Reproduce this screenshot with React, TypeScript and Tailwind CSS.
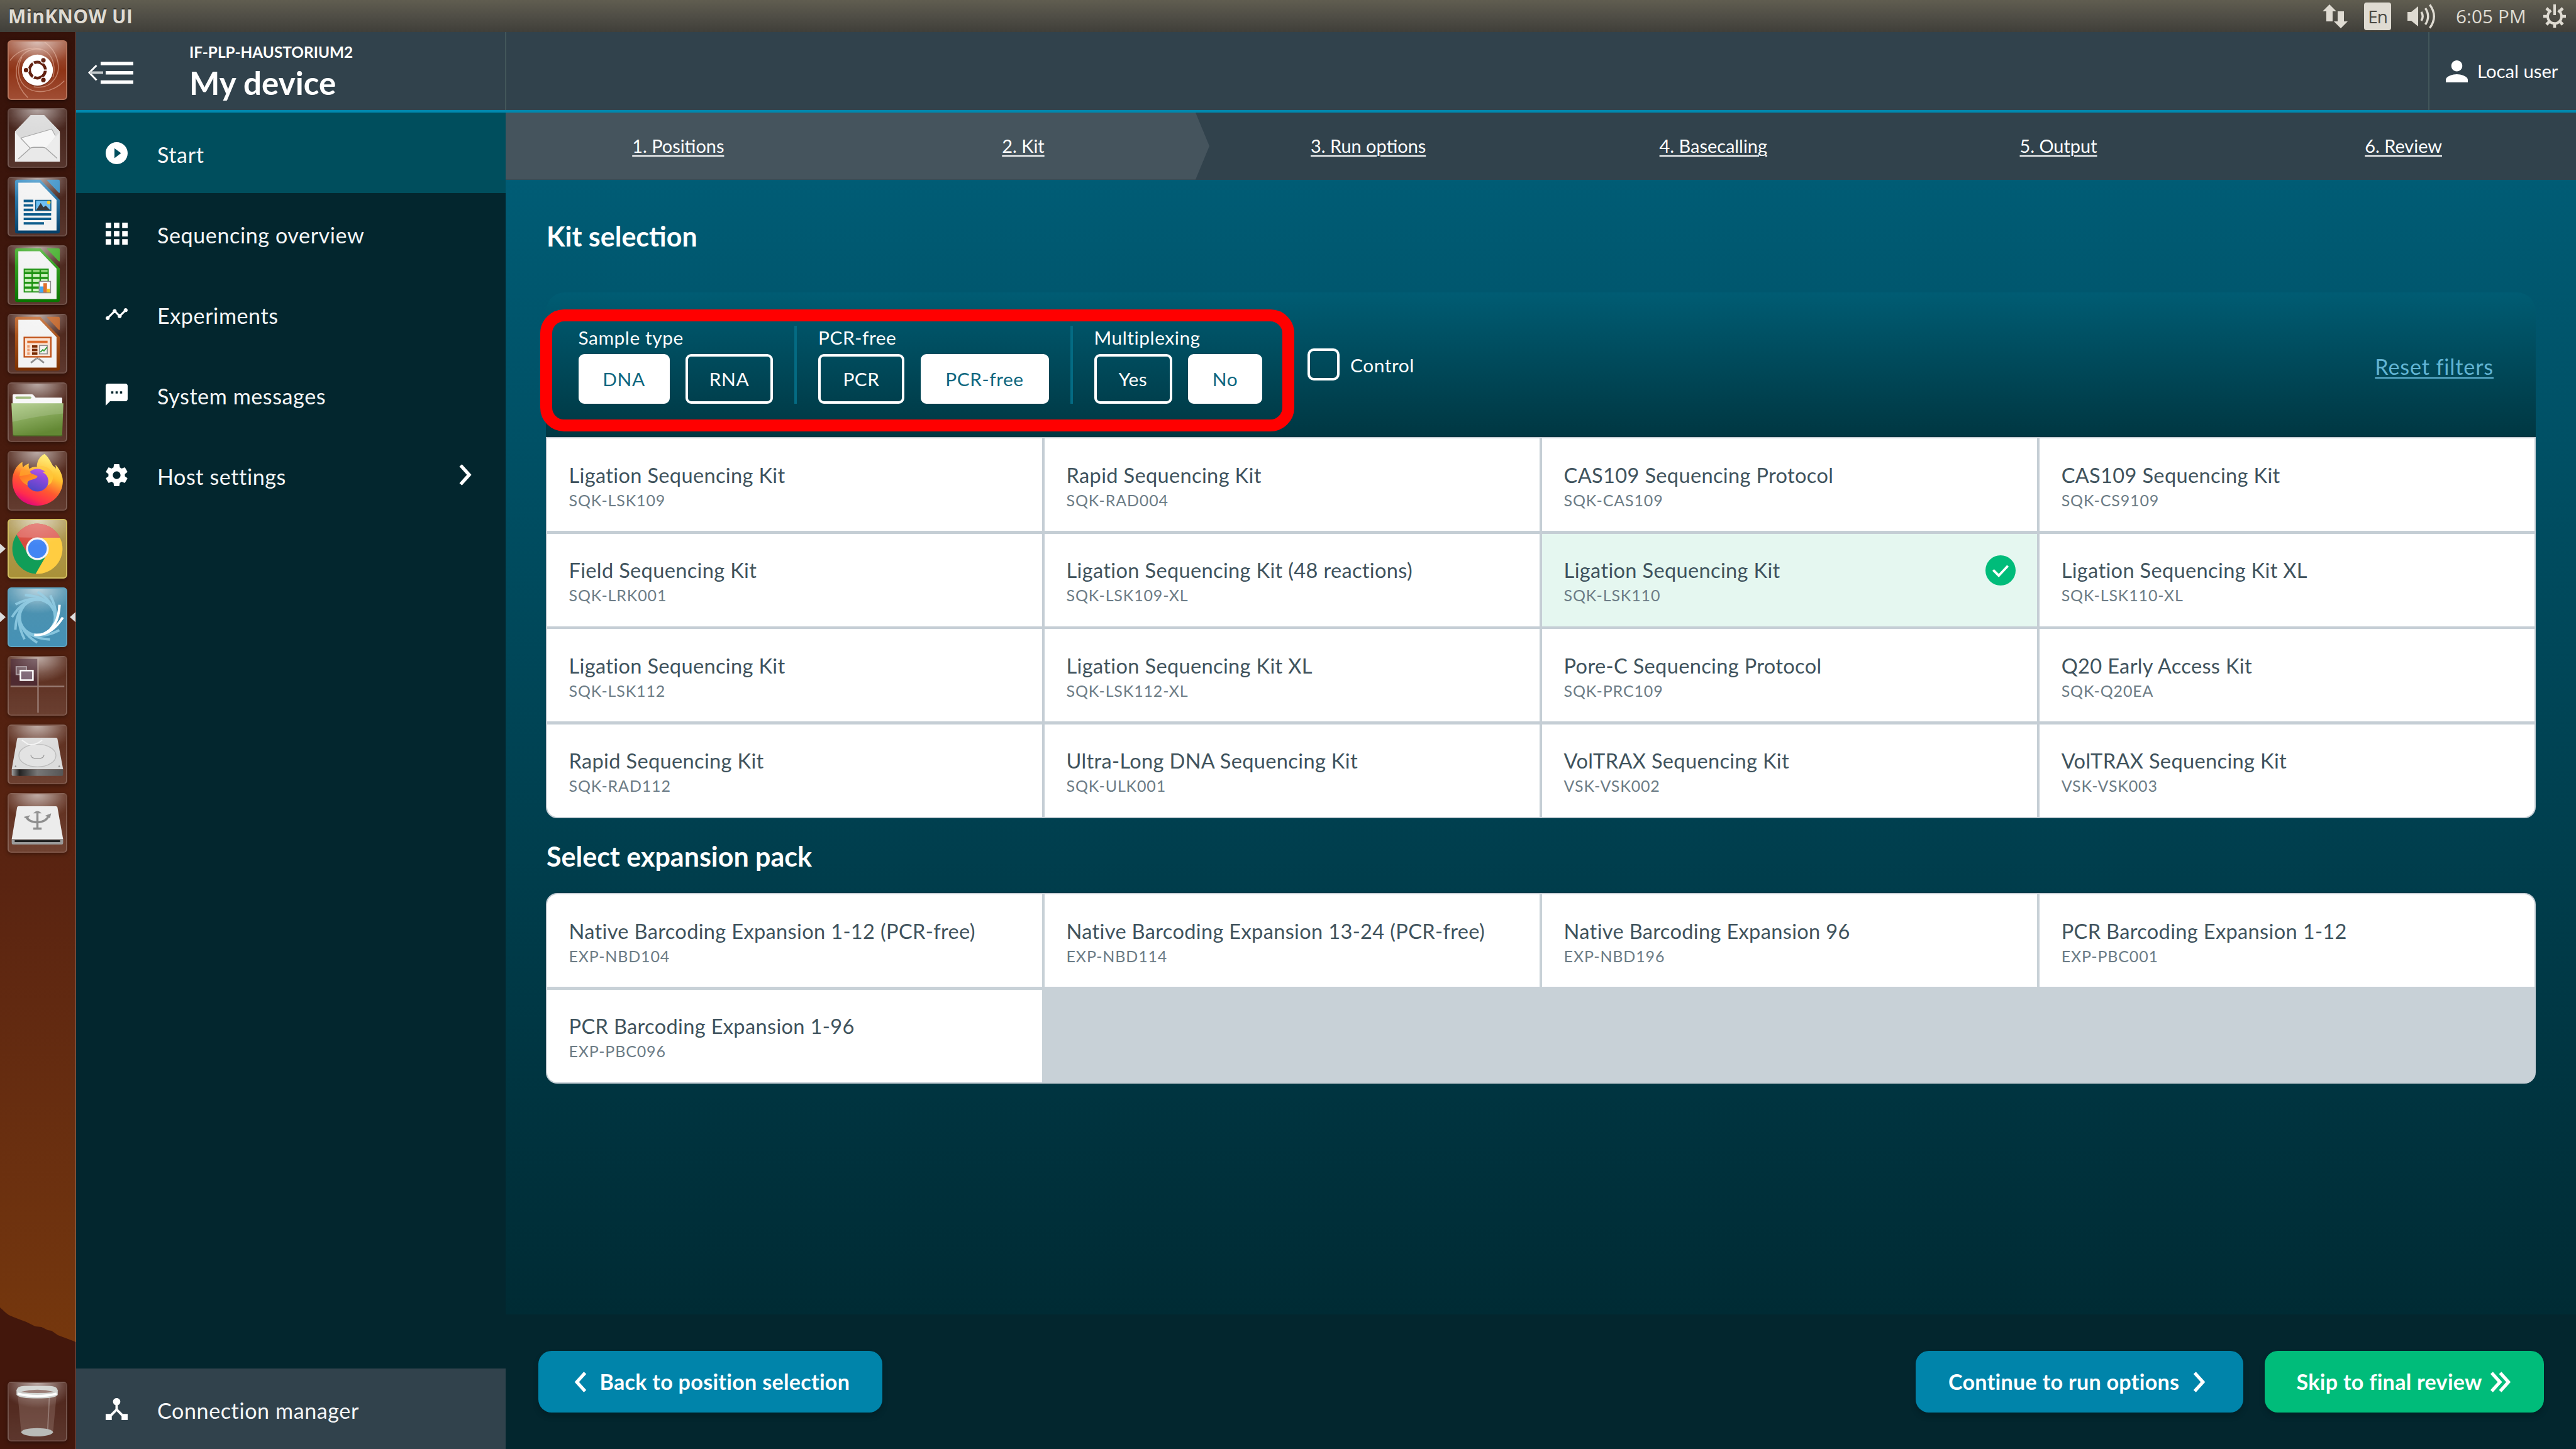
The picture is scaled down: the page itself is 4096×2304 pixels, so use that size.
import React from "react";

type Kit = { name: string; code: string; selected?: boolean };

const KITS: Kit[] = [
  { name: "Ligation Sequencing Kit", code: "SQK-LSK109" },
  { name: "Rapid Sequencing Kit", code: "SQK-RAD004" },
  { name: "CAS109 Sequencing Protocol", code: "SQK-CAS109" },
  { name: "CAS109 Sequencing Kit", code: "SQK-CS9109" },
  { name: "Field Sequencing Kit", code: "SQK-LRK001" },
  { name: "Ligation Sequencing Kit (48 reactions)", code: "SQK-LSK109-XL" },
  { name: "Ligation Sequencing Kit", code: "SQK-LSK110", selected: true },
  { name: "Ligation Sequencing Kit XL", code: "SQK-LSK110-XL" },
  { name: "Ligation Sequencing Kit", code: "SQK-LSK112" },
  { name: "Ligation Sequencing Kit XL", code: "SQK-LSK112-XL" },
  { name: "Pore-C Sequencing Protocol", code: "SQK-PRC109" },
  { name: "Q20 Early Access Kit", code: "SQK-Q20EA" },
  { name: "Rapid Sequencing Kit", code: "SQK-RAD112" },
  { name: "Ultra-Long DNA Sequencing Kit", code: "SQK-ULK001" },
  { name: "VolTRAX Sequencing Kit", code: "VSK-VSK002" },
  { name: "VolTRAX Sequencing Kit", code: "VSK-VSK003" },
];

const EXPANSIONS: Kit[] = [
  { name: "Native Barcoding Expansion 1-12 (PCR-free)", code: "EXP-NBD104" },
  { name: "Native Barcoding Expansion 13-24 (PCR-free)", code: "EXP-NBD114" },
  { name: "Native Barcoding Expansion 96", code: "EXP-NBD196" },
  { name: "PCR Barcoding Expansion 1-12", code: "EXP-PBC001" },
  { name: "PCR Barcoding Expansion 1-96", code: "EXP-PBC096" },
];

const STEPS = ["1. Positions", "2. Kit", "3. Run options", "4. Basecalling", "5. Output", "6. Review"];

/* ---------- top panel ---------- */

function TopPanel() {
  return (
    <div className="flex h-[51px] shrink-0 items-center justify-between bg-linear-to-b from-[#605d50] via-[#504e46] to-[#403f39] pr-[16px] pl-[13px] text-[#dfdbd2]">
      <div className="font-['Open_Sans'] text-[30px] leading-[48px] font-bold tracking-[0.35px] [text-shadow:0_-2px_1px_rgba(0,0,0,0.5)]">MinKNOW UI</div>
      <div className="flex items-center">
        <svg className="h-[38px] w-[40px]" viewBox="0 0 40 38" fill="currentColor">
          <path d="M11 0L22 11H16V27H6V11H0Z" />
          <path d="M29 38L18 27H24V11H34V27H40Z" />
        </svg>
        <div className="ml-[26px] flex h-[44px] w-[43px] items-center justify-center rounded-[4px] bg-[#dfdbd2] font-['Open_Sans'] text-[28px] leading-[40px] tracking-[-1px] text-[#4a4942]">En</div>
        <svg className="ml-[26px] h-[40px] w-[45px]" viewBox="0 0 45 40" fill="none" stroke="currentColor" strokeWidth="3.4">
          <path d="M0 13H6L17 4V36L6 27H0Z" fill="currentColor" stroke="none" />
          <path d="M22 13Q26.5 20 22 27" />
          <path d="M28.5 7Q37 20 28.5 33" />
          <path d="M35.5 1.5Q49 20 35.5 38.5" />
        </svg>
        <div className="ml-[32px] w-[111px] font-['Open_Sans'] text-[29.7px] leading-[48px] tracking-[0.1px] whitespace-nowrap">6:05 PM</div>
        <svg className="ml-[28px] h-[37px] w-[36px]" viewBox="0 0 36 37" fill="none" stroke="currentColor">
          <path d="M12.5 9.8A11 11 0 1 0 23.5 9.8" strokeWidth="4" />
          <path d="M18 0V17" strokeWidth="4" />
          <path d="M0 19H6M30 19H36M18 31V37M5 6L9.5 10.5M31 6L26.5 10.5M5 32L9.5 27.5M31 32L26.5 27.5" strokeWidth="4.6" />
        </svg>
      </div>
    </div>
  );
}

/* ---------- launcher ---------- */

function DocumentIcon({ dark, light, id, children }: { dark: string; light: string; id: string; children: React.ReactNode }) {
  return (
    <>
      <defs>
        <linearGradient id={id} x1="0" y1="0" x2="0" y2="1">
          <stop offset="0" stopColor={light} />
          <stop offset="1" stopColor={dark} />
        </linearGradient>
      </defs>
      <path d="M16 5H55L87.5 39V91Q87.5 95 84 95H16Q12.5 95 12.5 91V9Q12.5 5 16 5Z" fill={`url(#${id})`} />
      <path d="M66 5H85Q87.5 5 87.5 8V26Q87 28 85 26L66 6Z" fill={light} />
      <path d="M18 10H54L82 39V90H18Z" fill="#f3f3f3" />
      {children}
    </>
  );
}

function UbuntuIcon() {
  return (
    <>
      <g fill="none" stroke="#e9b9a5" strokeOpacity="0.55" strokeWidth="1.6">
        <path d="M4 34C20 12 50 8 66 20C78 30 80 48 76 62" />
        <path d="M62 3C84 18 92 48 78 66C70 78 56 80 44 78" />
        <path d="M95 68C76 88 46 92 28 76C16 64 16 44 24 28" />
        <path d="M34 96C12 74 8 44 26 24C34 16 46 13 56 16" />
      </g>
      <circle cx="50" cy="51" r="26.5" fill="#401008" fillOpacity="0.35" />
      <circle cx="50" cy="50" r="26" fill="#fff" />
      <circle cx="50" cy="50" r="13.2" fill="none" stroke="#61200f" strokeWidth="5" />
      <path d="M50 50L41.500 35.300M50 50L41.500 64.700M50 50H67" stroke="#fff" strokeWidth="2.200" />
      <circle cx="50" cy="50" r="10.700" fill="#fff" />
      <g fill="#61200f" stroke="#fff" strokeWidth="1.6">
        <circle cx="31" cy="50" r="4.6" />
        <circle cx="60" cy="33.5" r="4.6" />
        <circle cx="60" cy="66.5" r="4.6" />
      </g>
    </>
  );
}

function MailIcon() {
  return (
    <>
      <path d="M12.5 39L39 11.5H61L87.5 39V89.5H12.5Z" fill="#e4e4e4" />
      <path d="M12.5 39L39 11.5H61L87.5 39L80 48L22 52Z" fill="#dadada" />
      <path d="M22 50L74 35L81 46L64 68L38 68Z" fill="#f6f6f6" />
      <path d="M22 50L74 35L80 46" fill="none" stroke="#a8a8a8" strokeWidth="1.2" />
      <path d="M12.5 41L38 67L12.5 89.5Z" fill="#f0f0f0" />
      <path d="M87.5 41L64 66L87.5 89.5Z" fill="#ececec" />
      <path d="M12.5 89.5L38 67Q40 65.5 44 65.5H58Q62 65.5 64 67L87.5 89.5Z" fill="#e9e9e9" />
      <path d="M22 50L38 67M18 85L38 67Q40 65.5 44 65.5H58Q62 65.5 64 67L83 84" fill="none" stroke="#a3a3a3" strokeWidth="1.4" />
    </>
  );
}

function WriterIcon() {
  return (
    <DocumentIcon id="writer" light="#3f93c8" dark="#043f69">
      <path d="M27 40.5H43M27 48H43M27 55.5H43M27 63H73M27 70.5H73M27 78H61" stroke="#0d5c8c" strokeWidth="4" />
      <rect x="47" y="39.5" width="25.5" height="17" fill="#6fc0f2" stroke="#0d5c8c" strokeWidth="1.6" />
      <path d="M48 56L55.5 44L60 51L64 48.5L71.5 56Z" fill="#3a3a3a" />
      <circle cx="69" cy="43" r="3" fill="#f5cf36" />
    </DocumentIcon>
  );
}

function CalcIcon() {
  return (
    <DocumentIcon id="calc" light="#46b02e" dark="#087400">
      <rect x="27" y="39" width="42" height="40" fill="#1f9213" />
      <g fill="#d2f3c4">
        <path d="M29 41H40V45H29ZM42.5 41H53.5V45H42.5ZM56 41H67V45H56Z" fill="#8ed477" />
        <path d="M29 48.500H40V53H29ZM42.5 48.500H53.5V53H42.5ZM56 48.500H67V53H56Z" />
        <path d="M29 56.500H40V61H29ZM42.5 56.500H53.5V61H42.5ZM56 56.500H67V61H56Z" />
        <path d="M29 64.500H40V69H29ZM42.5 64.500H53.5V69H42.5Z" />
        <path d="M29 72.500H40V77H29ZM42.5 72.500H53.5V77H42.5Z" />
      </g>
      <rect x="53" y="60.500" width="19" height="19" fill="#fff" stroke="#8a8a8a" strokeWidth="1.6" />
      <path d="M54 69H60V79H54Z" fill="#3fa9f5" />
      <path d="M60 63.500H66V79H60Z" fill="#e0712c" />
      <path d="M66 73H71V79H66Z" fill="#f2c21a" />
    </DocumentIcon>
  );
}

function ImpressIcon() {
  return (
    <DocumentIcon id="impress" light="#c16429" dark="#7c3100">
      <path d="M50 73V76M52 75L61 82M48 75L39 82" stroke="#8d8d8d" strokeWidth="3" />
      <rect x="28" y="39.500" width="44.500" height="32.500" fill="#fbe3d3" stroke="#bf4e14" strokeWidth="2.4" />
      <path d="M33 47H67" stroke="#dc6c2d" strokeWidth="4" />
      <path d="M33 54.500H37M33 60.500H37M33 66.500H37" stroke="#eb9a6c" strokeWidth="4" />
      <path d="M41 54.500H50M41 60.500H50M41 66.500H50" stroke="#7a2d04" strokeWidth="4" />
      <rect x="53.500" y="53" width="13" height="14" fill="#f4f4f4" stroke="#8c8c8c" strokeWidth="1.6" />
      <path d="M55 64L59 60L61 62L66 56" fill="none" stroke="#35a035" strokeWidth="2" />
    </DocumentIcon>
  );
}

function FilesIcon() {
  return (
    <>
      <defs>
        <linearGradient id="folder" x1="0" y1="0" x2="0.4" y2="1">
          <stop offset="0" stopColor="#aac981" />
          <stop offset="1" stopColor="#638834" />
        </linearGradient>
      </defs>
      <path d="M10 20H41Q43 20 44 22L47 25.500H90Q91.500 25.500 91.500 27V45H8.500V22Q8.500 20 10 20Z" fill="#f7f7f7" />
      <path d="M15 25.500H38" stroke="#9cb877" strokeWidth="3.600" strokeLinecap="round" />
      <path d="M6.500 35H93.500L91.500 87Q91.500 89.500 89 89.500H12Q9.500 89.500 9 87Z" fill="url(#folder)" />
      <path d="M6.500 35H93.500L93 52Q50 56 8 66Z" fill="#fff" fillOpacity="0.14" />
      <path d="M9 88Q9.500 89.500 12 89.500H89Q91.500 89.500 91.500 87" fill="none" stroke="#4c6b24" strokeWidth="1.600" />
    </>
  );
}

function FirefoxIcon() {
  return (
    <>
      <defs>
        <linearGradient id="ff-body" x1="0.8" y1="0.05" x2="0.35" y2="1">
          <stop offset="0" stopColor="#fff36a" />
          <stop offset="0.35" stopColor="#ffbd2e" />
          <stop offset="0.62" stopColor="#ff5a2f" />
          <stop offset="0.85" stopColor="#ff2c4d" />
          <stop offset="1" stopColor="#e0067c" />
        </linearGradient>
        <linearGradient id="ff-globe" x1="0.7" y1="0" x2="0.3" y2="1">
          <stop offset="0" stopColor="#b14be8" />
          <stop offset="1" stopColor="#4b46c4" />
        </linearGradient>
        <linearGradient id="ff-face" x1="0" y1="0" x2="1" y2="1">
          <stop offset="0" stopColor="#ff6a2a" />
          <stop offset="1" stopColor="#ffab1f" />
        </linearGradient>
      </defs>
      <path d="M62 5C70 12 73 20 76 25C80 27 81 29 81 31C81 28 80.500 25 80 23C88 31 92.500 41 92.500 51C92 74 73 91.500 50 91.500C26 91.500 8 74 8 50C8 38 14 24 25 18.500C24.500 22 25 25 26 27C29 24 32 22 36 21C35 24 35 27 36.500 30C41 27 45 26 49 27C49 17 54 9 62 5Z" fill="url(#ff-body)" />
      <circle cx="50" cy="49" r="19" fill="url(#ff-globe)" />
      <path d="M49 28C56 27 64 31 66 37C62 35 60 35 59 36C68 40 70 50 67 58C76 54 78 44 74 35C70 28 58 22 49 27Z" fill="#ffc537" />
      <path d="M19 40C28 36 38 36 50 42C50 46 44 47 38 49C34 50 32 54 34 58C26 54 20 48 19 40Z" fill="url(#ff-face)" />
      <path d="M22 32C30 30 36 33 40 38C34 40 26 42 20 42Z" fill="#ff9a26" />
    </>
  );
}

function ChromeIcon() {
  return (
    <>
      <path d="M15.100 26.600A42 42 0 0 1 87.700 31.500H50V50L34 59.250Z" fill="#d84a3e" />
      <path d="M15.100 26.600A42 42 0 0 1 87.700 31.500H50L20 31Z" fill="#e06a62" />
      <path d="M15.100 26.600A42 42 0 0 0 47.200 91.900L66 59.250L50 50L34 59.250Z" fill="#119d58" />
      <path d="M47.200 91.900A42 42 0 0 0 87.700 31.500H50V50L66 59.250Z" fill="#ffcd41" />
      <circle cx="50" cy="50" r="19" fill="#f4f4f6" />
      <circle cx="50" cy="50" r="15.600" fill="#4285f4" />
    </>
  );
}

function MinknowIcon() {
  return (
    <g fill="none" strokeWidth="4.200">
      {[60, 90, 120, 150, 180, 210, 240, 270, 300, 330].map((angle) => (
        <path key={angle} d="M60 78C78 70 86 52 87 29" stroke="#86c4dd" transform={`rotate(${angle} 50 50)`} />
      ))}
      <path d="M60 78C78 70 86 52 87 29" stroke="#fff" />
      <path d="M60 78C78 70 86 52 87 29" stroke="#fff" transform="rotate(30 50 50)" />
    </g>
  );
}

function WorkspacesIcon() {
  return (
    <>
      <path d="M5 5H50V50H5Z" fill="#4a2836" fillOpacity="0.75" />
      <path d="M51 4V95M5 51H95" stroke="#b09a94" strokeOpacity="0.7" strokeWidth="2.400" />
      <rect x="14.500" y="18" width="17" height="13" fill="#8a7a80" fillOpacity="0.6" stroke="#a99aa0" strokeWidth="2" />
      <rect x="21.500" y="24.500" width="21" height="16" fill="#7c6474" stroke="#fff" strokeWidth="2.600" />
    </>
  );
}

function DiskIcon() {
  return (
    <>
      <defs>
        <linearGradient id="disk-front" x1="0" y1="0" x2="1" y2="0">
          <stop offset="0" stopColor="#a0a0a0" />
          <stop offset="0.15" stopColor="#222" />
          <stop offset="0.5" stopColor="#777" />
          <stop offset="1" stopColor="#555" />
        </linearGradient>
      </defs>
      <path d="M18 22H81Q83 22 83.500 24L93 75H7L16 24Q16.500 22 18 22Z" fill="#dcdcdc" />
      <path d="M7 75H93V84Q93 86 91 86H9Q7 86 7 84Z" fill="url(#disk-front)" />
      <ellipse cx="50" cy="52" rx="31" ry="19" fill="#e3e3e3" stroke="#bcbcbc" strokeWidth="1.400" />
      <path d="M39 51Q39 57 50 57Q61 57 61 51" fill="none" stroke="#9a9a9a" strokeWidth="1.400" />
      <path d="M24 26L34 33Q46 36 58 26" fill="none" stroke="#f4f4f4" strokeWidth="2" />
      <g fill="#8e8e8e">
        <circle cx="13.500" cy="70" r="1.300" />
        <circle cx="86.500" cy="70" r="1.300" />
      </g>
    </>
  );
}

function UsbIcon() {
  return (
    <>
      <path d="M18 22H81Q83 22 83.500 24L93 77H7L16 24Q16.500 22 18 22Z" fill="#ececec" />
      <path d="M7 77H93V84Q93 86 91 86H9Q7 86 7 84Z" fill="#9a9a9a" />
      <path d="M12 80.500H88" stroke="#1e1e1e" strokeWidth="3" />
      <g fill="none" stroke="#8e8e8e" strokeWidth="3.600">
        <path d="M50 33V59" />
        <path d="M43 59.500H57" />
        <path d="M32 40Q34 48 50 49Q66 48 69 37" />
      </g>
      <path d="M43 34Q50 26 57 34ZM27 40L38 37L33 44ZM63 38L73 34L71 42Z" fill="#8e8e8e" />
    </>
  );
}

function TrashIcon() {
  return (
    <>
      <path d="M17 22L23 86H76L82 22Z" fill="#c8b0aa" fillOpacity="0.22" />
      <path d="M70 26L67 84" stroke="#fff" strokeOpacity="0.25" strokeWidth="2" />
      <path d="M15 14Q16 7 28 7H70Q83 7 84 14V22Q80 28 50 28Q20 28 15 22Z" fill="#cdd0cd" />
      <path d="M22 17Q50 10 78 17Q50 21 22 17Z" fill="#8b6a62" />
      <path d="M17 20Q50 28 82 20" fill="none" stroke="#fff" strokeWidth="4" />
      <ellipse cx="49.500" cy="84.500" rx="26.500" ry="7" fill="#b9bbb8" />
    </>
  );
}

function Tile({ tone = "glass", running, focused, children }: { tone?: "glass" | "ubuntu" | "gold" | "blue"; running?: boolean; focused?: boolean; children: React.ReactNode }) {
  const tones = {
    glass: "bg-linear-to-b from-white/5 to-white/14 border-white/18",
    ubuntu: "bg-linear-to-b from-[#a35a42] via-[#8f3416] to-[#a04d33] border-[#b6745c]",
    gold: "bg-linear-to-b from-[#b09a58] to-[#a99138] border-[#d2bf62]",
    blue: "bg-linear-to-b from-[#4f92ae] to-[#4591b5] border-[#5fa4c2]",
  };
  return (
    <div className="relative flex h-[95px] w-[121px] shrink-0 pl-[12px]">
      {running && <span className="absolute top-[39px] left-0 h-[16px] w-[9px] bg-[#dcdcdc] [clip-path:polygon(0_0,100%_50%,0_100%)]" />}
      {focused && <span className="absolute top-[39px] right-[1px] h-[16px] w-[9px] bg-[#dcdcdc] [clip-path:polygon(100%_0,0_50%,100%_100%)]" />}
      <div className={`relative h-[95px] w-[95px] overflow-hidden rounded-[6px] border-2 shadow-[0_2px_6px_rgba(0,0,0,0.35)] ${tones[tone]}`}>
        <div className="absolute inset-x-0 top-0 h-[40px] bg-[radial-gradient(ellipse_70%_100%_at_50%_0%,rgba(255,255,255,0.5),rgba(255,255,255,0.12)_65%,transparent)]" />
        <svg className="relative -m-[2px] h-[95px] w-[95px]" viewBox="0 0 100 100">{children}</svg>
        <div className="absolute inset-x-0 top-0 h-[40px] bg-[radial-gradient(ellipse_60%_100%_at_50%_0%,rgba(255,255,255,0.22),transparent)]" />
      </div>
    </div>
  );
}

function Launcher() {
  return (
    <aside className="relative flex w-[121px] shrink-0 flex-col justify-between bg-linear-to-b from-[#35120a] via-[#5a2411] via-60% to-[#7c3c0b] pt-[12.500px] pb-[12.500px]">
      <svg className="absolute bottom-0 left-0 h-[225px] w-[121px]" viewBox="0 0 121 225">
        <path d="M0 0C5 4 8 8 14 12C22 16 32 19 42 23L56 30L66 31L76 36L82 37L92 44L108 50L121 55V225H0Z" fill="#43170c" />
      </svg>
      <span className="absolute top-0 right-0 h-full w-[2px] bg-white/15" />
      <div className="relative flex flex-col gap-[13.850px]">
        <Tile tone="ubuntu"><UbuntuIcon /></Tile>
        <Tile><MailIcon /></Tile>
        <Tile><WriterIcon /></Tile>
        <Tile><CalcIcon /></Tile>
        <Tile><ImpressIcon /></Tile>
        <Tile><FilesIcon /></Tile>
        <Tile><FirefoxIcon /></Tile>
        <Tile tone="gold" running><ChromeIcon /></Tile>
        <Tile tone="blue" running focused><MinknowIcon /></Tile>
        <Tile><WorkspacesIcon /></Tile>
        <Tile><DiskIcon /></Tile>
        <Tile><UsbIcon /></Tile>
      </div>
      <Tile><TrashIcon /></Tile>
    </aside>
  );
}

/* ---------- application header ---------- */

function Header() {
  return (
    <header className="flex h-[128px] shrink-0 border-b-4 border-[#0088ae] bg-[#31424c] text-white">
      <div className="flex w-[684px] border-r-2 border-[#42565a]">
        <svg className="mt-[47px] ml-[19px] h-[36px] w-[72px]" viewBox="0 0 72 36" fill="none" stroke="#fff">
          <path d="M20 3H72M28 17.800H72M20 32.500H72" strokeWidth="5.600" />
          <path d="M13.500 6L2 17.500L13.500 29.500" strokeWidth="3" />
          <path d="M3 17.500H24" strokeWidth="4" stroke="#c4cacd" />
        </svg>
        <div className="ml-[89px] pt-[14.500px] font-bold">
          <div className="text-[24.400px] leading-[34px]">IF-PLP-HAUSTORIUM2</div>
          <div className="text-[51.200px] leading-[62px]">My device</div>
        </div>
      </div>
      <div className="flex-1" />
      <div className="flex w-[235px] items-center border-l-2 border-[#42565a] pl-[26px]">
        <svg className="h-[35px] w-[35px]" viewBox="4 4 16 16" fill="#fff">
          <path d="M12 12c2.210 0 4-1.790 4-4s-1.790-4-4-4-4 1.790-4 4 1.790 4 4 4zm0 2c-2.670 0-8 1.340-8 4v2h16v-2c0-2.660-5.330-4-8-4z" />
        </svg>
        <span className="ml-[15px] text-[29.250px] leading-[40px]">Local user</span>
      </div>
    </header>
  );
}

/* ---------- side navigation ---------- */

const NAV = [
  { label: "Start", active: true, viewBox: "2 2 20 20", d: "M12 2C6.480 2 2 6.480 2 12s4.480 10 10 10 10-4.480 10-10S17.520 2 12 2zm-2 14.500v-9l6 4.500-6 4.500z" },
  { label: "Sequencing overview", viewBox: "4 4 16 16", d: "M4 8h4V4H4v4zm6 12h4v-4h-4v4zm-6 0h4v-4H4v4zm0-6h4v-4H4v4zm6 0h4v-4h-4v4zm6-10v4h4V4h-4zm-6 4h4V4h-4v4zm6 6h4v-4h-4v4zm0 6h4v-4h-4v4z" },
  { label: "Experiments", viewBox: "1 1 22 22", d: "M23 8c0 1.100-.9 2-2 2-.180 0-.350-.020-.510-.070l-3.560 3.550c.050.160.070.340.070.520 0 1.100-.9 2-2 2s-2-.9-2-2c0-.180.020-.360.070-.520l-2.550-2.550c-.160.050-.340.070-.520.070s-.360-.020-.520-.070l-4.550 4.560c.050.160.070.330.070.510 0 1.100-.9 2-2 2s-2-.9-2-2 .9-2 2-2c.180 0 .350.020.510.070l4.560-4.550C8.020 9.360 8 9.180 8 9c0-1.100.9-2 2-2s2 .9 2 2c0 .180-.020.360-.070.520l2.550 2.550c.160-.050.340-.070.520-.070s.360.020.520.070l3.550-3.560C19.020 8.350 19 8.180 19 8c0-1.100.9-2 2-2s2 .9 2 2z" },
  { label: "System messages", viewBox: "2 2 20 20", d: "M20 2H4c-1.100 0-1.990.9-1.990 2L2 22l4-4h14c1.100 0 2-.9 2-2V4c0-1.100-.9-2-2-2zM9 11H7V9h2v2zm4 0h-2V9h2v2zm4 0h-2V9h2v2z" },
  { label: "Host settings", expandable: true, viewBox: "2 2 20 20", d: "M19.430 12.980c.040-.320.070-.640.070-.980s-.030-.660-.070-.980l2.110-1.650c.190-.150.240-.420.120-.640l-2-3.460c-.120-.220-.390-.300-.610-.220l-2.490 1c-.520-.400-1.080-.730-1.690-.980l-.380-2.650C14.460 2.180 14.250 2 14 2h-4c-.250 0-.460.180-.490.420l-.380 2.650c-.610.250-1.170.590-1.690.980l-2.490-1c-.230-.090-.490 0-.610.220l-2 3.460c-.130.220-.070.490.120.640l2.110 1.650c-.040.320-.070.650-.070.980s.030.660.070.980l-2.110 1.650c-.190.150-.240.420-.120.640l2 3.460c.120.220.390.300.610.220l2.490-1c.520.400 1.080.730 1.690.980l.380 2.650c.030.240.240.420.490.420h4c.250 0 .460-.180.490-.420l.380-2.650c.610-.250 1.170-.590 1.690-.980l2.490 1c.230.090.490 0 .610-.220l2-3.460c.120-.220.070-.490-.120-.640l-2.110-1.650zM12 15.500c-1.930 0-3.500-1.570-3.500-3.500s1.570-3.500 3.500-3.500 3.500 1.570 3.500 3.500-1.570 3.500-3.500 3.500z" },
];

function Chevron({ direction = "right", className }: { direction?: "left" | "right"; className?: string }) {
  return (
    <svg className={className} viewBox="0 0 20 34" fill="none" stroke="#fff" strokeWidth="5.400" strokeLinejoin="miter">
      <path d={direction === "right" ? "M2.500 2L16 17L2.500 32" : "M17.500 2L4 17L17.500 32"} />
    </svg>
  );
}

function NavRow({ label, d, viewBox, active, expandable }: { label: string; d: string; viewBox: string; active?: boolean; expandable?: boolean }) {
  return (
    <div className={`flex h-[128px] shrink-0 items-center pl-[47px] ${active ? "bg-[#004e5d]" : ""}`}>
      <svg className="h-[35px] w-[35px] shrink-0" viewBox={viewBox} fill="#fff"><path d={d} /></svg>
      <span className="ml-[47px] pt-[5px] text-[34.130px] leading-[44px] tracking-[0.570px] text-[#f4f6f7]">{label}</span>
      {expandable && <Chevron className="mr-[54px] ml-auto h-[34px] w-[20px]" />}
    </div>
  );
}

function Sidebar() {
  return (
    <nav className="flex w-[683px] shrink-0 flex-col bg-[#03262e]">
      {NAV.map((item) => <NavRow key={item.label} {...item} />)}
      <div className="mt-auto bg-[#31424c]">
        <NavRow label="Connection manager" viewBox="3 3 18 18" d="M17 16l-4-4V8.820C14.160 8.400 15 7.300 15 6c0-1.660-1.340-3-3-3S9 4.340 9 6c0 1.300.840 2.400 2 2.820V12l-4 4H3v5h5v-3.050l4-4.200 4 4.200V21h5v-5h-4z" />
      </div>
    </nav>
  );
}

/* ---------- main content ---------- */

function StepBar() {
  return (
    <div className="relative grid h-[106.500px] shrink-0 grid-cols-6 items-center bg-[#31424c] text-center text-[28.900px] leading-[40px] text-white">
      <span className="absolute inset-y-0 left-0 w-[1119px] bg-[#45545d] [clip-path:polygon(0_0,1097px_0,100%_50%,1097px_100%,0_100%)]" />
      {STEPS.map((s) => (
        <span key={s} className="relative underline decoration-2 underline-offset-[4px]">{s}</span>
      ))}
    </div>
  );
}

function FilterButton({ label, on, className }: { label: string; on?: boolean; className: string }) {
  return (
    <button className={`h-[79px] rounded-[9px] border-4 border-white pt-[2px] text-center ${on ? "bg-white text-[#0d6780]" : "text-white"} ${className}`}>{label}</button>
  );
}

function FilterGroup({ title, children }: { title: string; children: React.ReactNode }) {
  return (
    <div>
      <div className="leading-[38px]">{title}</div>
      <div className="mt-[7px] flex gap-[25.500px]">{children}</div>
    </div>
  );
}

function Filters() {
  return (
    <div className="relative flex h-[230.500px] shrink-0 items-center rounded-t-[30px] bg-linear-to-b from-[#005c73] to-[#003742] pr-[67px] pl-[51.500px] text-[29.870px] leading-[38px] tracking-[0.550px] text-white">
      <FilterGroup title="Sample type">
        <FilterButton label="DNA" on className="w-[145px]" />
        <FilterButton label="RNA" className="w-[139px]" />
      </FilterGroup>
      <span className="mx-[34px] h-[124px] w-[4px] bg-[#046b83]" />
      <FilterGroup title="PCR-free">
        <FilterButton label="PCR" className="w-[137px]" />
        <FilterButton label="PCR-free" on className="w-[204px]" />
      </FilterGroup>
      <span className="mx-[34px] h-[124px] w-[4px] bg-[#046b83]" />
      <FilterGroup title="Multiplexing">
        <FilterButton label="Yes" className="w-[124px]" />
        <FilterButton label="No" on className="w-[118px]" />
      </FilterGroup>
      <span className="ml-[72px] h-[51px] w-[51px] rounded-[10px] border-4 border-white" />
      <span className="ml-[17px] pt-[3px]">Control</span>
      <span className="ml-auto pt-[6px] text-[34.130px] tracking-[0.870px] text-[#62b5d4] underline decoration-2 underline-offset-[4px]">Reset filters</span>
      <span className="absolute top-[27px] -left-[9px] h-[194.500px] w-[1199px] rounded-[38px] border-[19.500px] border-[#ff0000]" />
    </div>
  );
}

function KitCell({ kit }: { kit: Kit }) {
  return (
    <div className={`flex justify-between pt-[38.500px] pl-[34.500px] ${kit.selected ? "bg-[#e5f7f0]" : "bg-white"}`}>
      <div>
        <div className="text-[32.600px] leading-[40px] tracking-[0.330px] whitespace-nowrap text-[#40535d]">{kit.name}</div>
        <div className="text-[25px] leading-[38px] tracking-[0.850px] text-[#6c7c86]">{kit.code}</div>
      </div>
      {kit.selected && (
        <svg className="-mt-[4.500px] mr-[34px] h-[48px] w-[48px]" viewBox="0 0 152 152">
          <circle cx="76" cy="76" r="76" fill="#00bc7a" />
          <path d="M39 74L67 102L113 53" fill="none" stroke="#fff" strokeWidth="12" />
        </svg>
      )}
    </div>
  );
}

function ActionButton({ className, children }: { className: string; children: React.ReactNode }) {
  return (
    <button className={`flex h-[98px] items-center rounded-[21px] text-[34.130px] leading-[44px] font-bold tracking-[0.270px] whitespace-nowrap text-white shadow-[0_6px_10px_rgba(0,0,0,0.18)] ${className}`}>{children}</button>
  );
}

function Main() {
  return (
    <main className="flex flex-1 flex-col bg-[#03262e]">
      <StepBar />
      <section className="flex flex-1 flex-col bg-linear-to-b from-[#005c75] to-[#002b34] px-[64px] pt-[64px]">
        <h1 className="mb-[63px] pl-px text-[43px] leading-[52px] font-bold text-white">Kit selection</h1>
        <Filters />
        <div className="grid h-[606px] shrink-0 grid-cols-4 grid-rows-4 gap-[4.200px] overflow-hidden rounded-b-[18px] border-2 border-[#c5ced5] bg-[#c5ced5]">
          {KITS.map((kit) => <KitCell key={kit.code} kit={kit} />)}
        </div>
        <h2 className="mt-[35px] mb-[32px] pl-px text-[43px] leading-[52px] font-bold text-white">Select expansion pack</h2>
        <div className="grid h-[303px] shrink-0 grid-cols-4 grid-rows-2 gap-[4.200px] overflow-hidden rounded-[18px] border-2 border-[#c5ced5] bg-[#c8d1d7]">
          {EXPANSIONS.map((kit) => <KitCell key={kit.code} kit={kit} />)}
        </div>
      </section>
      <footer className="flex h-[214px] shrink-0 items-center px-[51.500px]">
        <ActionButton className="w-[547px] bg-[#0084aa] pl-[57px]">
          <Chevron direction="left" className="mr-[21px] h-[33px] w-[20px]" />
          Back to position selection
        </ActionButton>
        <ActionButton className="ml-auto w-[521px] bg-[#0084aa] pl-[52px]">
          Continue to run options
          <Chevron className="ml-[22px] h-[33px] w-[20px]" />
        </ActionButton>
        <ActionButton className="ml-[33.500px] w-[444px] bg-[#00bc7a] pl-[51px]">
          Skip to final review
          <svg className="ml-[12px] h-[33px] w-[34px]" viewBox="0 0 34 34" fill="none" stroke="#fff" strokeWidth="5.400">
            <path d="M2.500 2L16 17L2.500 32M16.500 2L30 17L16.500 32" />
          </svg>
        </ActionButton>
      </footer>
    </main>
  );
}

export default function App() {
  return (
    <div className="flex h-[2304px] w-[4096px] flex-col overflow-hidden bg-[#03262e] font-[Lato,sans-serif]">
      <TopPanel />
      <div className="flex min-h-0 flex-1">
        <Launcher />
        <div className="flex flex-1 flex-col">
          <Header />
          <div className="flex min-h-0 flex-1">
            <Sidebar />
            <Main />
          </div>
        </div>
      </div>
    </div>
  );
}
